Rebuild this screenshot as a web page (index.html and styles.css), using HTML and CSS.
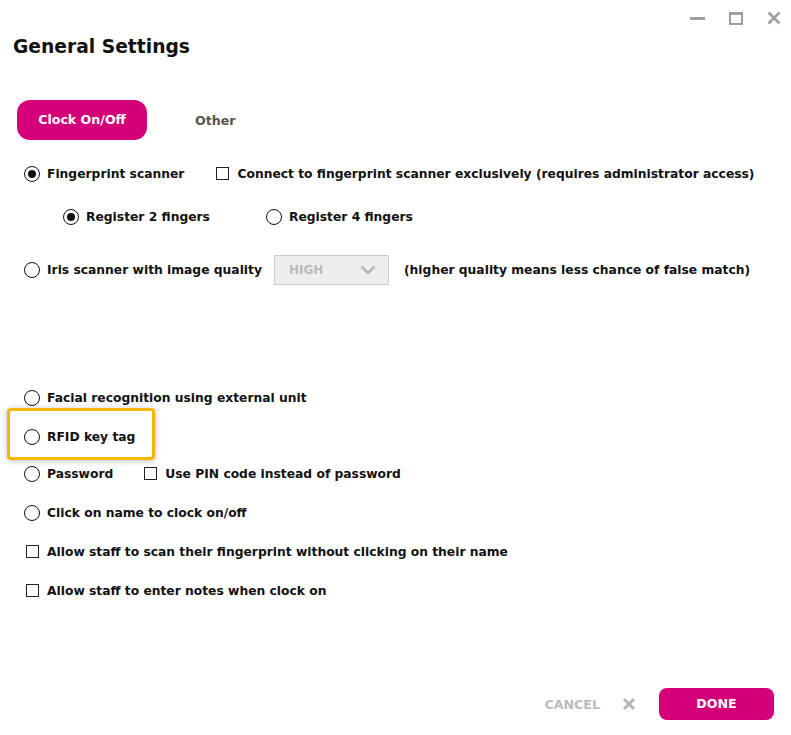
FILE: index.html
```html
<!DOCTYPE html>
<html lang="en">
  <head>
    <meta charset="UTF-8" />
    <meta name="viewport" content="width=device-width, initial-scale=1.0" />
    <title>General Settings</title>
    <link rel="stylesheet" href="styles.css">
  </head>
  <body>
    <div class="dialog">
      <div class="window-controls">
        <span class="ctl ctl-min"></span>
        <span class="ctl ctl-max"></span>
        <svg class="ctl ctl-close" width="14" height="14" viewBox="0 0 14 14">
          <path d="M1.5 1.5 L12.5 12.5 M12.5 1.5 L1.5 12.5" stroke="#a0a0a0" stroke-width="2.6" />
        </svg>
      </div>

      <div class="dialog-title">General Settings</div>

      <div class="tabs">
        <div class="tab active">Clock On/Off</div>
        <div class="tab">Other</div>
      </div>

      <div class="options">
        <div class="row row-first">
          <span class="radio checked"></span>
          <span class="label">Fingerprint scanner</span>
          <span class="check gap-left"></span>
          <span class="label">Connect to fingerprint scanner exclusively (requires administrator access)</span>
        </div>
        <div class="row row-sub">
          <span class="radio checked"></span>
          <span class="label">Register 2 fingers</span>
          <span class="radio gap-wide"></span>
          <span class="label">Register 4 fingers</span>
        </div>
        <div class="row row-iris">
          <span class="radio"></span>
          <span class="label">Iris scanner with image quality</span>
          <div class="select">
            <span>HIGH</span>
            <svg width="16" height="10" viewBox="0 0 16 10">
              <path d="M1.5 1.5 L8 8 L14.5 1.5" fill="none" stroke="#b5b5b5" stroke-width="2.6" />
            </svg>
          </div>
          <span class="label">(higher quality means less chance of false match)</span>
        </div>
        <div class="row row-face">
          <span class="radio"></span>
          <span class="label">Facial recognition using external unit</span>
        </div>
        <div class="row row-rfid">
          <span class="highlight"></span>
          <span class="radio"></span>
          <span class="label">RFID key tag</span>
        </div>
        <div class="row row-pass">
          <span class="radio"></span>
          <span class="label label-pass">Password</span>
          <span class="check"></span>
          <span class="label">Use PIN code instead of password</span>
        </div>
        <div class="row">
          <span class="radio"></span>
          <span class="label">Click on name to clock on/off</span>
        </div>
        <div class="row">
          <span class="check check-lead"></span>
          <span class="label">Allow staff to scan their fingerprint without clicking on their name</span>
        </div>
        <div class="row">
          <span class="check check-lead"></span>
          <span class="label">Allow staff to enter notes when clock on</span>
        </div>
      </div>

      <div class="footer">
        <span class="cancel">CANCEL</span>
        <svg class="cancel-x" width="14" height="14" viewBox="0 0 14 14">
          <path d="M2 2 L12 12 M12 2 L2 12" stroke="#b5b5b5" stroke-width="3" />
        </svg>
        <div class="done">DONE</div>
      </div>
    </div>
  </body>
</html>
```

FILE: styles.css
```css
* {
  margin: 0;
  padding: 0;
  box-sizing: border-box;
}

body {
  font-family: "DejaVu Sans", Verdana, sans-serif;
  font-weight: bold;
  background-color: #ffffff;
  color: #111;
  width: 791px;
  height: 735px;
  overflow: hidden;
}

.dialog {
  position: relative;
  height: 735px;
}

.window-controls {
  display: flex;
  justify-content: flex-end;
  align-items: center;
  gap: 24px;
  height: 36px;
  padding: 0 10px 0 0;
}

.ctl {
  display: block;
}

.ctl-min {
  width: 15px;
  height: 3px;
  background-color: #a0a0a0;
}

.ctl-max {
  width: 14px;
  height: 13px;
  border: 2px solid #a0a0a0;
  border-top-width: 3px;
}

.dialog-title {
  font-size: 18.7px;
  padding: 1px 0 0 13px;
  height: 64px;
  line-height: 20px;
}

.tabs {
  display: flex;
  align-items: center;
  padding-left: 17px;
  height: 40px;
}

.tab {
  font-size: 12.6px;
  color: #555;
  padding: 0 20px;
  white-space: nowrap;
}

.tab.active {
  background-color: #d4007a;
  color: #ffffff;
  border-radius: 13px;
  height: 40px;
  line-height: 39px;
  width: 130px;
  text-align: center;
  padding: 0;
  margin-right: 28px;
}

.options {
  padding-left: 24px;
  font-size: 12.3px;
  white-space: nowrap;
}

.row {
  display: flex;
  align-items: center;
  height: 39px;
  position: relative;
}

.row-first {
  margin-top: 14px;
}

.row-sub {
  margin-top: 4px;
  padding-left: 39px;
}

.row-iris {
  margin-top: 14px;
}

.row-face {
  margin-top: 89px;
}

.row-pass {
  margin-top: -2px;
}

.radio {
  width: 16px;
  height: 16px;
  border: 1.6px solid #111;
  border-radius: 50%;
  display: flex;
  align-items: center;
  justify-content: center;
  flex-shrink: 0;
  margin-right: 7px;
}

.radio.checked::after {
  content: "";
  width: 8px;
  height: 8px;
  border-radius: 50%;
  background-color: #111;
}

.check {
  width: 13px;
  height: 13px;
  border: 1.5px solid #222;
  flex-shrink: 0;
  margin-right: 8px;
}

.check-lead {
  margin-left: 2px;
}

.gap-left {
  margin-left: 32px;
}

.gap-wide {
  margin-left: 56px;
}

.label-pass {
  margin-right: 31px;
}

.select {
  display: flex;
  align-items: center;
  justify-content: space-between;
  width: 115px;
  height: 30px;
  margin: 0 15px 0 12px;
  padding: 0 12px 0 14px;
  background-color: #eeeeee;
  border: 1px solid #cccccc;
  color: #bbbbbb;
  font-size: 12px;
}

.highlight {
  position: absolute;
  left: -17px;
  top: -9px;
  width: 148px;
  height: 52px;
  border: 3px solid #f7b500;
  border-radius: 4px;
  box-shadow: 0 1px 6px rgba(0, 0, 0, 0.25);
}

.footer {
  position: absolute;
  right: 17px;
  bottom: 15px;
  display: flex;
  align-items: center;
}

.cancel {
  color: #bbbbbb;
  font-size: 12.6px;
  margin-right: 22px;
}

.cancel-x {
  margin-right: 23px;
}

.done {
  background-color: #d4007a;
  color: #ffffff;
  font-size: 12.6px;
  width: 115px;
  height: 32px;
  line-height: 32px;
  text-align: center;
  border-radius: 8px;
}
```
